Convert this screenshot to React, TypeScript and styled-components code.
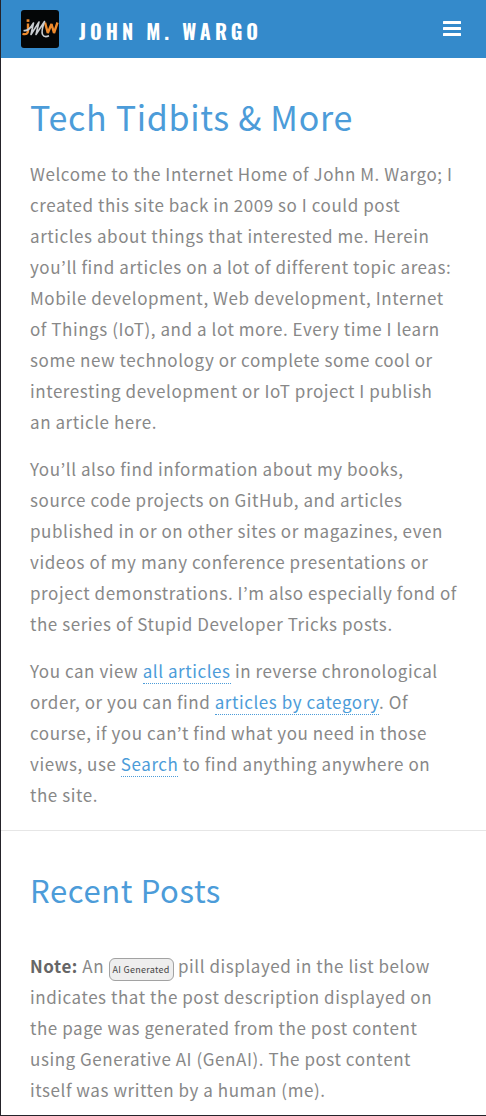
import React from 'react';
import styled, { createGlobalStyle } from 'styled-components';

const GlobalStyle = createGlobalStyle`
  *, *::before, *::after { box-sizing: border-box; }
  html { background: #fff; }
  body {
    margin: 0;
    background: #fff;
    color: #888;
    font-family: "Noto Sans CJK KR", "Noto Sans", sans-serif;
    font-size: 17px;
    line-height: 31px;
    letter-spacing: 0.033em;
  }
`;

const Page = styled.div`
  min-height: 100vh;
  border-left: 1px solid #25232a;
  border-bottom: 1px solid #25232a;
`;

const Header = styled.header`
  display: flex;
  align-items: center;
  height: 58px;
  padding: 0 25px 0 20px;
  background: #348acb;
`;

const Brand = styled.a`
  display: flex;
  align-items: center;
  gap: 20px;
  color: #fff;
  text-decoration: none;
`;

const SiteName = styled.span`
  padding-top: 3px;
  font-family: Oswald, "Roboto Condensed", "Open Sans Condensed", "Noto Sans CJK KR", sans-serif;
  font-size: 20px;
  font-weight: 700;
  line-height: 28px;
  letter-spacing: 4px;
  text-transform: uppercase;
  white-space: nowrap;
`;

const MenuButton = styled.button`
  display: flex;
  margin-left: auto;
  padding: 0;
  border: 0;
  background: none;
  color: #fff;
  cursor: pointer;
`;

const Section = styled.section`
  padding: 34px 25px 0 29px;

  & + & {
    margin-top: 20px;
    border-top: 1px solid #e6e6e6;
  }
`;

const Title = styled.h1`
  margin: 0 0 16px;
  color: #4c9cd9;
  font-size: 34px;
  font-weight: 400;
  line-height: 50px;
  letter-spacing: 0.02em;
`;

const Subtitle = styled.h2`
  margin: 0 0 35px;
  color: #4c9cd9;
  font-size: 31px;
  font-weight: 400;
  line-height: 50px;
  letter-spacing: 0.02em;
`;

const Text = styled.p`
  margin: 0;

  & + & {
    margin-top: 16px;
  }
`;

const Link = styled.a`
  border-bottom: 1px dotted #4c9cd9;
  color: #4c9cd9;
  text-decoration: none;
`;

const Strong = styled.strong`
  color: #666;
  font-weight: 700;
`;

const Pill = styled.span`
  padding: 4px 3px;
  border: 1px solid #a2a2a2;
  border-radius: 6px;
  background: #eee;
  color: #444;
  font-size: 9px;
  line-height: 12px;
  letter-spacing: 0.03em;
`;

const Logo = () => (
  <svg width="38" height="38" viewBox="0 0 38 38" fill="none" aria-hidden="true">
    <rect width="38" height="38" rx="3" fill="#040607" />
    <g stroke="#ee8a2c" strokeWidth="2.400">
      <path d="M7 13.500v7.500c0 2.800-1.800 3.600-5.500 2.800" />
      <path d="M7 9.300v2.600" strokeWidth="2.800" />
      <path d="M24 12.500l2.800 10.500 3.700-9 2.500 9 3.500-10.500" strokeLinejoin="bevel" />
    </g>
    <path
      d="M2.500 20.500c4 1 6.500-1.500 10-7.500l-2.500 11.500 8-12.500-3 12.500 8.500-13c-2 6-3.500 10-2 13 1.200 2.300 3.500 2.600 6.500 1.300"
      stroke="#c9cdd1"
      strokeWidth="1.600"
      strokeLinejoin="round"
    />
  </svg>
);

const MenuIcon = () => (
  <svg width="18" height="16" viewBox="0 0 18 16" fill="currentColor" aria-hidden="true">
    <rect y="0" width="18" height="3" rx="0.500" />
    <rect y="6" width="18" height="3" rx="0.500" />
    <rect y="12" width="18" height="3" rx="0.500" />
  </svg>
);

export default function App() {
  return (
    <Page>
      <GlobalStyle />
      <Header>
        <Brand href="#home">
          <Logo />
          <SiteName>John M. Wargo</SiteName>
        </Brand>
        <MenuButton type="button" aria-label="Menu">
          <MenuIcon />
        </MenuButton>
      </Header>
      <main>
        <Section>
          <Title>Tech Tidbits &amp; More</Title>
          <Text>
            Welcome to the Internet Home of John M. Wargo; I created this site back in 2009 so I
            could post articles about things that interested me. Herein you’ll find articles on a
            lot of different topic areas: Mobile development, Web development, Internet of Things
            (IoT), and a lot more. Every time I learn some new technology or complete some cool or
            interesting development or IoT project I publish an&nbsp;article here.
          </Text>
          <Text>
            You’ll also find information about my books, source code projects on GitHub, and
            articles published in or on other sites or magazines, even videos of my many conference
            presentations or project demonstrations. I’m also especially fond of the series of
            Stupid Developer Tricks posts.
          </Text>
          <Text>
            You can view <Link href="#articles">all articles</Link> in reverse chronological order,
            or you can find <Link href="#categories">articles by category</Link>. Of course, if you
            can’t find what you need in those views, use <Link href="#search">Search</Link> to find
            anything anywhere on the site.
          </Text>
        </Section>
        <Section>
          <Subtitle>Recent Posts</Subtitle>
          <Text>
            <Strong>Note:</Strong> An <Pill>AI Generated</Pill> pill displayed in the list below
            indicates that the post description displayed on the page was generated from the post
            content using Generative AI (GenAI). The post content itself&nbsp;was written by a human
            (me).
          </Text>
        </Section>
      </main>
    </Page>
  );
}
